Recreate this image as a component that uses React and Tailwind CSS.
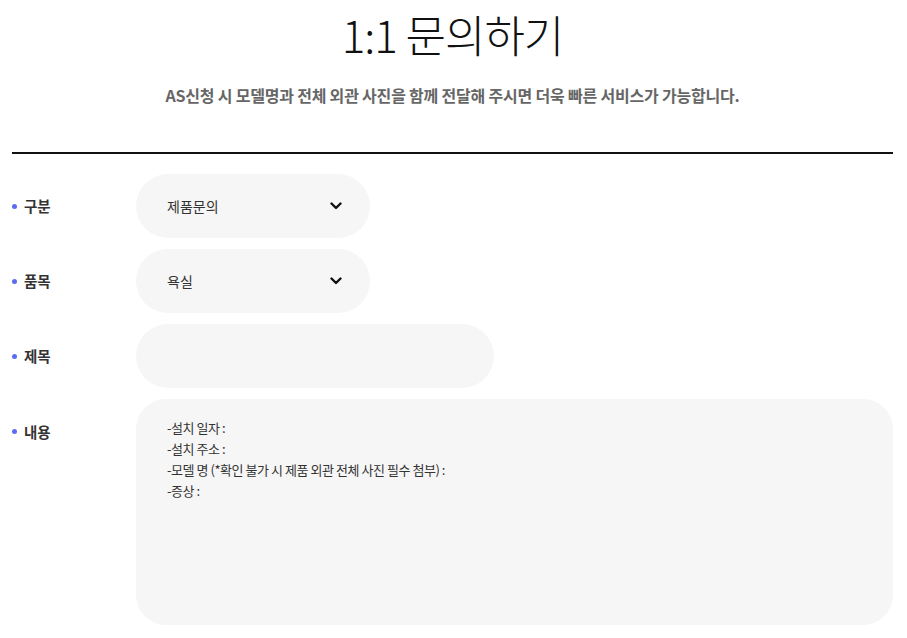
import React from 'react';

const font = { fontFamily: '"Noto Sans CJK KR", "Noto Sans", sans-serif' };

function Chevron() {
  return (
    <svg width="12" height="8" viewBox="0 0 12 8" fill="none">
      <path d="M1.5 1.5L6 6L10.5 1.5" stroke="#111" strokeWidth="2.4" strokeLinecap="round" strokeLinejoin="round" />
    </svg>
  );
}

function Label({ children }) {
  return (
    <div className="w-[124px] shrink-0 flex items-center gap-[7px] text-[14.5px] font-bold text-[#333] h-[64px]">
      <span className="w-[5px] h-[5px] rounded-full bg-[#5b6cf2]" />
      <span>{children}</span>
    </div>
  );
}

function Select({ value }) {
  return (
    <div className="w-[234px] h-[64px] rounded-full bg-[#f6f6f6] flex items-center justify-between pl-[31px] pr-[28px] text-[14px] text-[#333]">
      <span>{value}</span>
      <Chevron />
    </div>
  );
}

export default function App() {
  return (
    <div className="min-h-[638px] bg-white pl-[12px] pr-[14px]" style={font}>
      <h1 className="text-center text-[44px] font-light text-[#111] leading-none pt-[12px] tracking-[-1px]">1:1 문의하기</h1>
      <p className="text-center text-[16px] font-bold text-[#666] mt-[27px] tracking-[-0.2px]">
        AS신청 시 모델명과 전체 외관 사진을 함께 전달해 주시면 더욱 빠른 서비스가 가능합니다.
      </p>

      <div className="border-t-2 border-[#111] mt-[45px] pt-[20px] flex flex-col gap-[11px]">
        <div className="flex">
          <Label>구분</Label>
          <Select value="제품문의" />
        </div>
        <div className="flex">
          <Label>품목</Label>
          <Select value="욕실" />
        </div>
        <div className="flex">
          <Label>제목</Label>
          <div className="w-[358px] h-[64px] rounded-full bg-[#f6f6f6]" />
        </div>
        <div className="flex items-start">
          <div className="w-[124px] shrink-0 flex items-center gap-[7px] text-[14.5px] font-bold text-[#333] pt-[22px]">
            <span className="w-[5px] h-[5px] rounded-full bg-[#5b6cf2]" />
            <span>내용</span>
          </div>
          <div className="flex-1 h-[226px] rounded-[30px] bg-[#f6f6f6] pl-[31px] pt-[18px] text-[13px] leading-[21px] text-[#333] tracking-[-0.45px]">
            <div>-설치 일자 :</div>
            <div>-설치 주소 :</div>
            <div>-모델 명 (*확인 불가 시 제품 외관 전체 사진 필수 첨부) :</div>
            <div>-증상 :</div>
          </div>
        </div>
      </div>
    </div>
  );
}
